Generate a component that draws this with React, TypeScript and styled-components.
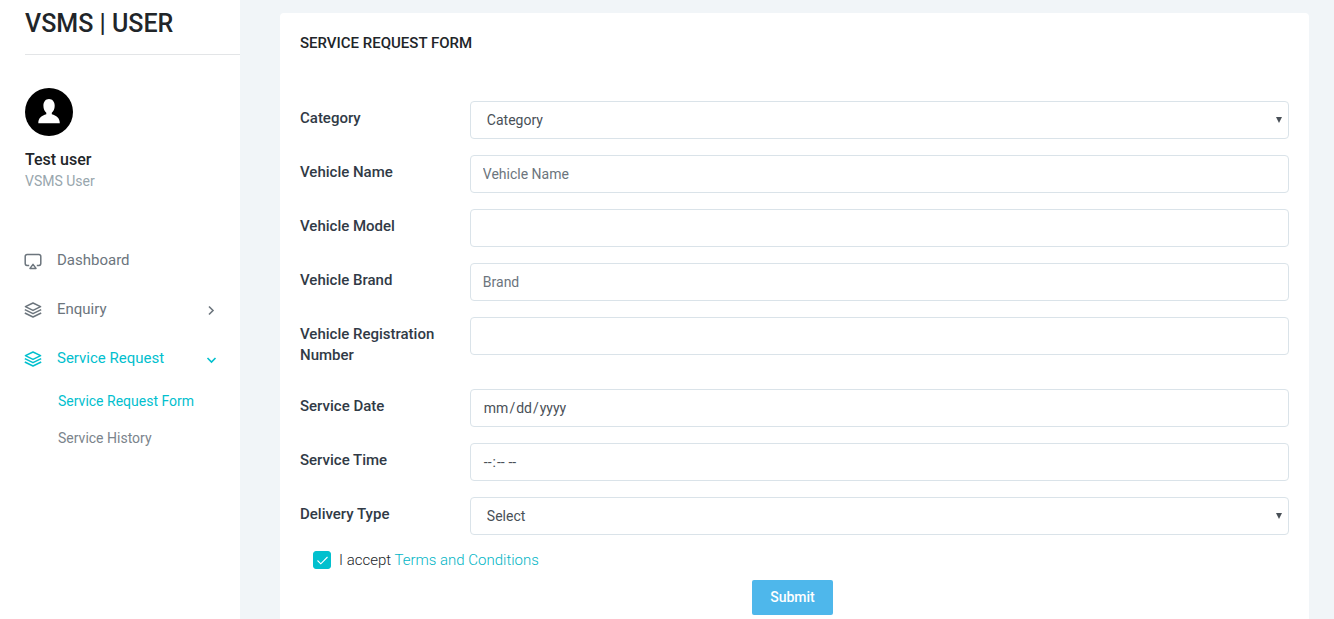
import React, { useState } from 'react';
import styled, { createGlobalStyle, css } from 'styled-components';

const ui = 'Roboto, "Liberation Sans", sans-serif';

const GlobalStyle = createGlobalStyle`
  *, *::before, *::after { box-sizing: border-box; }
  body {
    margin: 0;
    background: #f1f5f8;
    color: #212529;
    font: 400 14px/21px ${ui};
  }
  a { text-decoration: none; }
`;

const Page = styled.div`
  display: flex;
  min-height: 100vh;
`;

const Sidebar = styled.aside`
  flex: 0 0 240px;
  background: #fff;
  padding-left: 25px;
`;

const Brand = styled.h3`
  margin: 0;
  padding: 9px 0 15px;
  border-bottom: 1px solid #e3e5e7;
  font-size: 25px;
  line-height: 30px;
  font-weight: 500;
`;

const Profile = styled.div`
  padding: 33px 0 58px;
`;

const Avatar = styled.svg`
  display: block;
  width: 48px;
  height: 48px;
  margin-bottom: 13px;
`;

const UserName = styled.h5`
  margin: 0;
  font-size: 16px;
  line-height: 22px;
  font-weight: 500;
`;

const UserRole = styled.p`
  margin: 0;
  line-height: 21px;
  color: #98a6ad;
`;

const Menu = styled.ul`
  margin: 0;
  padding: 0;
  list-style: none;
`;

const MenuLink = styled.a<{ $active?: boolean }>`
  display: flex;
  align-items: center;
  height: 21px;
  margin-bottom: 28px;
  padding-right: 23px;
  font-size: 15px;
  color: ${(p) => (p.$active ? '#02c0ce' : '#6c757d')};
`;

const MenuIcon = styled.svg`
  flex: none;
  width: 18px;
  height: 18px;
  margin: 0 15px 0 -1px;
`;

const MenuText = styled.span`
  flex: 1;
`;

const Chevron = styled.svg`
  flex: none;
  width: 12px;
  height: 12px;
`;

const SubMenu = styled(Menu)`
  margin-top: -6px;
  padding-left: 33px;
`;

const SubLink = styled.a<{ $active?: boolean }>`
  display: block;
  padding-bottom: 16px;
  color: ${(p) => (p.$active ? '#02c0ce' : '#7b848c')};
`;

const Main = styled.main`
  flex: 1;
  min-width: 0;
  display: flex;
  padding: 13px 25px 0 40px;
`;

const Card = styled.section`
  flex: 1;
  min-width: 0;
  padding: 20px 20px 4px;
  border-radius: 4px 4px 0 0;
  background: #fff;
`;

const CardTitle = styled.h4`
  margin: 0 0 48px;
  font-size: 15px;
  line-height: 20px;
  font-weight: 500;
  text-transform: uppercase;
`;

const Row = styled.div`
  display: grid;
  grid-template-columns: minmax(0, 1fr) minmax(0, 5fr);
  align-items: start;
  margin: 0 -15px 16px;
`;

const Label = styled.label`
  padding: 7px 15px;
  font-size: 15px;
  line-height: 21px;
  font-weight: 500;
  color: #313a46;
`;

const Cell = styled.div`
  position: relative;
  padding: 0 15px;
`;

const control = css`
  display: block;
  width: 100%;
  height: 38px;
  padding: 0 12px;
  border: 1px solid #dae3e9;
  border-radius: 4px;
  outline: none;
  background: #fff;
  color: #495057;
  font: 400 14px/21px ${ui};
`;

const Input = styled.input`
  ${control}
  &::placeholder { color: #6c757d; opacity: 1; }
  &::-webkit-calendar-picker-indicator { display: none; }
`;

const Select = styled.select`
  ${control}
  padding: 0 16px;
  appearance: none;
`;

const Arrow = styled.svg`
  position: absolute;
  top: 16px;
  right: 22px;
  width: 6px;
  height: 6px;
  pointer-events: none;
`;

const Terms = styled.div`
  display: flex;
  align-items: center;
  gap: 8px;
  height: 18px;
  margin-bottom: 11px;
  padding-left: 13px;
  font-size: 15px;
  font-weight: 300;
  line-height: 20px;
`;

const Check = styled.input`
  appearance: none;
  width: 18px;
  height: 18px;
  margin: 0;
  border: 1px solid #02c0ce;
  border-radius: 3px;
  background: #fff;
  &:checked {
    background: #02c0ce url("data:image/svg+xml,%3Csvg xmlns='http://www.w3.org/2000/svg' viewBox='0 0 16 16'%3E%3Cpath d='M3.5 8.5l3.3 3.3L13.5 5' fill='none' stroke='white' stroke-width='1.1'/%3E%3C/svg%3E") center / 16px 16px no-repeat;
  }
`;

const TermsLink = styled.a`
  color: #02b5c5;
`;

const Actions = styled.div`
  display: flex;
  justify-content: center;
  padding-right: 4px;
`;

const Submit = styled.button`
  height: 35px;
  padding: 0 18px;
  border: 0;
  border-radius: 2px;
  background: #4eb7eb;
  color: #fff;
  font: 500 14px/21px ${ui};
`;

function LayersIcon() {
  return (
    <MenuIcon viewBox="0 0 18 18" fill="none" stroke="currentColor" strokeWidth="1.5" strokeLinejoin="round" aria-hidden="true">
      <path d="M9 2l7.600 3.700L9 9.400 1.400 5.700z" />
      <path d="M.8 8.700L9 12.700l8.200-4" />
      <path d="M.8 12L9 16l8.200-4" />
    </MenuIcon>
  );
}

function ScreenIcon() {
  return (
    <MenuIcon viewBox="0 0 18 18" fill="none" stroke="currentColor" strokeWidth="1.5" strokeLinejoin="round" aria-hidden="true">
      <path d="M5.200 13.400H3a1.800 1.800 0 0 1-1.800-1.800V4.400A1.800 1.800 0 0 1 3 2.600h12a1.800 1.800 0 0 1 1.800 1.800v7.200a1.800 1.800 0 0 1-1.800 1.800h-2.200" />
      <path d="M9 12.400l3 4H6z" />
    </MenuIcon>
  );
}

function Toggle({ open }: { open?: boolean }) {
  return (
    <Chevron viewBox="0 0 12 12" fill="none" stroke="currentColor" strokeWidth="1.6" aria-hidden="true">
      <path d={open ? 'M2.500 5l4 4 4-4' : 'M4 2.500l4 4-4 4'} />
    </Chevron>
  );
}

type Field = { id: string; label: string; type?: string; placeholder?: string; options?: string[] };

const fields: Field[] = [
  { id: 'category', label: 'Category', options: ['Category'] },
  { id: 'name', label: 'Vehicle Name', type: 'text', placeholder: 'Vehicle Name' },
  { id: 'model', label: 'Vehicle Model', type: 'text' },
  { id: 'brand', label: 'Vehicle Brand', type: 'text', placeholder: 'Brand' },
  { id: 'registration', label: 'Vehicle Registration Number', type: 'text' },
  { id: 'date', label: 'Service Date', type: 'date' },
  { id: 'time', label: 'Service Time', type: 'time' },
  { id: 'delivery', label: 'Delivery Type', options: ['Select'] },
];

function FormRow({ field }: { field: Field }) {
  return (
    <Row>
      <Label htmlFor={field.id}>{field.label}</Label>
      <Cell>
        {field.options ? (
          <>
            <Select id={field.id}>
              {field.options.map((o) => <option key={o}>{o}</option>)}
            </Select>
            <Arrow viewBox="0 0 6 6" aria-hidden="true"><path d="M0 0h6L3 6z" fill="#495057" /></Arrow>
          </>
        ) : (
          <Input id={field.id} type={field.type} placeholder={field.placeholder} />
        )}
      </Cell>
    </Row>
  );
}

export default function App() {
  const [accepted, setAccepted] = useState(true);
  return (
    <>
      <GlobalStyle />
      <Page>
        <Sidebar>
          <Brand>VSMS | USER</Brand>
          <Profile>
            <Avatar viewBox="0 0 48 48" role="img" aria-label="Test user">
              <circle cx="24" cy="24" r="24" />
              <path fill="#fff" d="M24 11c3.500 0 5.700 2.800 5.700 6.800 0 3.200-1.300 5.600-2.900 7v1.500c4.500 1.200 8 3.600 8 8.900H13.300c0-5.300 3.500-7.700 8-8.900v-1.500c-1.600-1.400-2.900-3.800-2.900-7C18.400 13.800 20.500 11 24 11z" />
            </Avatar>
            <UserName>Test user</UserName>
            <UserRole>VSMS User</UserRole>
          </Profile>
          <nav>
            <Menu>
              <li><MenuLink href="#dashboard"><ScreenIcon /><MenuText>Dashboard</MenuText></MenuLink></li>
              <li><MenuLink href="#enquiry"><LayersIcon /><MenuText>Enquiry</MenuText><Toggle /></MenuLink></li>
              <li>
                <MenuLink href="#service" $active><LayersIcon /><MenuText>Service Request</MenuText><Toggle open /></MenuLink>
                <SubMenu>
                  <li><SubLink href="#form" $active>Service Request Form</SubLink></li>
                  <li><SubLink href="#history">Service History</SubLink></li>
                </SubMenu>
              </li>
            </Menu>
          </nav>
        </Sidebar>
        <Main>
          <Card>
            <CardTitle>Service Request Form</CardTitle>
            <form onSubmit={(e) => e.preventDefault()}>
              {fields.map((f) => <FormRow key={f.id} field={f} />)}
              <Terms>
                <Check id="terms" type="checkbox" checked={accepted} onChange={(e) => setAccepted(e.target.checked)} />
                <label htmlFor="terms">I accept <TermsLink href="#terms">Terms and Conditions</TermsLink></label>
              </Terms>
              <Actions><Submit type="submit">Submit</Submit></Actions>
            </form>
          </Card>
        </Main>
      </Page>
    </>
  );
}
